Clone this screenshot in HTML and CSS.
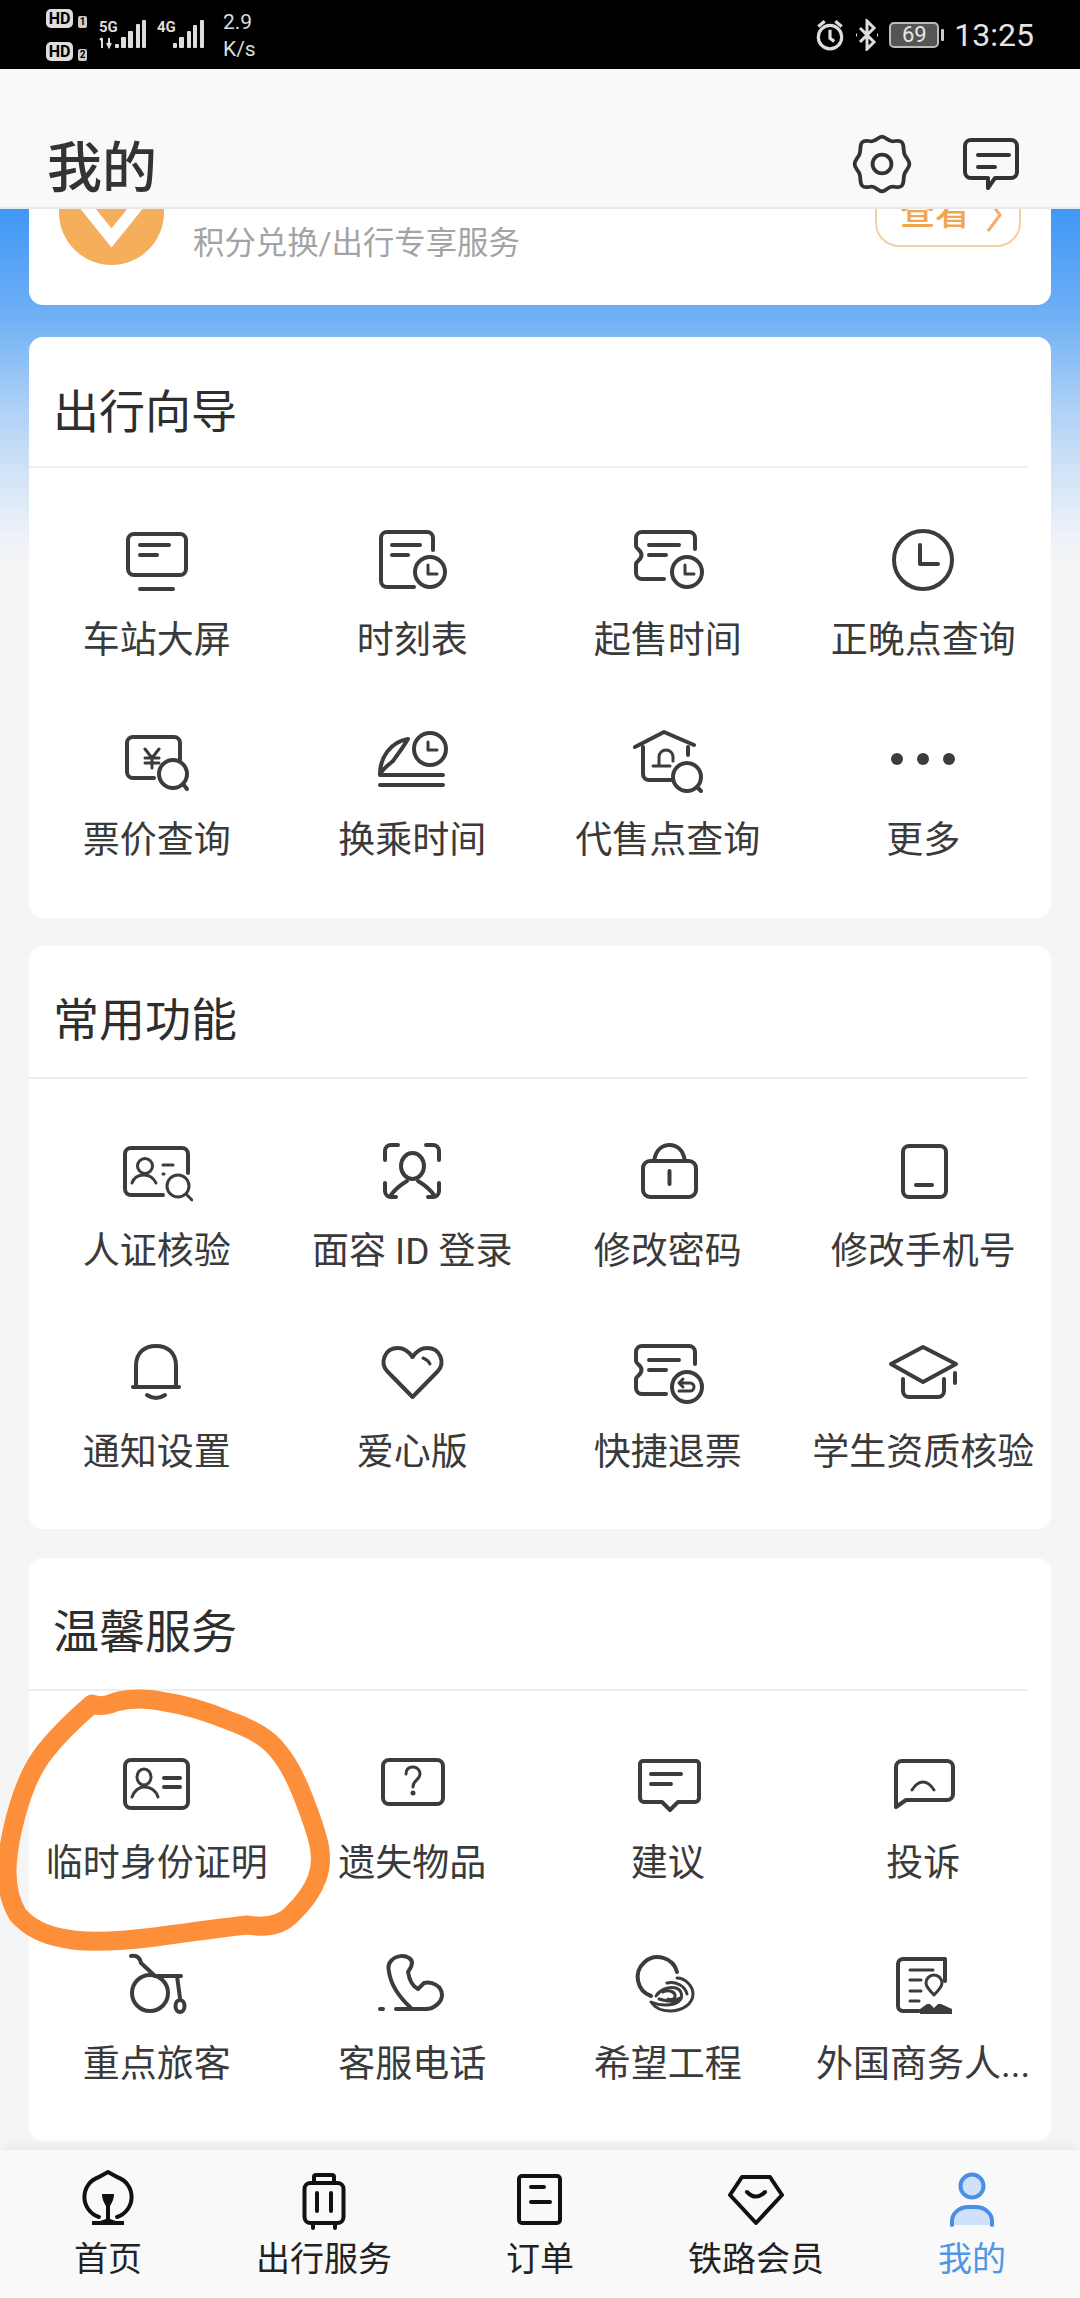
FILE: index.html
```html
<!DOCTYPE html>
<html lang="zh-CN">
<head>
<meta charset="utf-8">
<title>我的</title>
<link rel="stylesheet" href="styles.css">
</head>
<body>
<div class="app">
  <div class="statusbar">
    <div class="status-left">
      <div class="sims">
        <div class="sim"><span class="hd">HD</span><span class="simno">1</span></div>
        <div class="sim"><span class="hd">HD</span><span class="simno">2</span></div>
      </div>
      <svg class="signals" width="106" height="69" viewBox="0 0 106 69">
        <text class="net" x="0" y="32">5G</text>
        <path class="sb-line" d="M3 38v10M1 40l2-2M10 38v9M8 43l2 4 2-4"/>
        <rect class="sb-bar" x="16" y="44" width="4" height="4" rx="1"/>
        <rect class="sb-bar" x="22" y="37" width="5" height="11" rx="1"/>
        <rect class="sb-bar" x="29" y="31" width="5" height="17" rx="1"/>
        <rect class="sb-bar" x="37" y="24" width="4" height="24" rx="1"/>
        <rect class="sb-bar" x="43" y="20" width="4" height="28" rx="1"/>
        <text class="net" x="58" y="32">4G</text>
        <rect class="sb-bar" x="74" y="43" width="4" height="5" rx="1"/>
        <rect class="sb-bar" x="80" y="37" width="5" height="11" rx="1"/>
        <rect class="sb-bar" x="88" y="31" width="4" height="17" rx="1"/>
        <rect class="sb-bar" x="94" y="25" width="4" height="23" rx="1"/>
        <rect class="sb-bar" x="101" y="20" width="4" height="28" rx="1"/>
      </svg>
      <div class="speed"><span>2.9</span><span>K/s</span></div>
    </div>
    <div class="status-right">
      <svg class="sb-ic" width="30" height="34" viewBox="0 0 28 32"><circle cx="14" cy="18" r="11"/><path d="M14 11v8l4 3M3 8l6-5M25 8l-6-5"/></svg>
      <svg class="sb-ic" width="24" height="32" viewBox="0 0 24 32"><path d="M5 9l14 14-7 7V2l7 7L5 23"/><path d="M1 16h1M22 16h1"/></svg>
      <div class="battery"><div class="batt-body"><span class="batt-text">69</span></div><div class="batt-nub"></div></div>
      <span class="clock">13:25</span>
    </div>
  </div>

  <header class="topbar">
    <h1 class="title">我的</h1>
    <div class="top-actions">
      <svg class="top-ic gear" width="68" height="68" viewBox="0 0 72 72"><path d="M36 7C40 7 42 12 47 12C51 12 54 10 57 13C60 16 58 22 60 26C62 30 65 32 65 36C65 40 62 42 60 46C58 50 60 56 57 59C54 62 51 60 47 60C42 60 40 65 36 65C32 65 30 60 25 60C21 60 18 62 15 59C12 56 14 50 12 46C10 42 7 40 7 36C7 32 10 30 12 26C14 22 12 16 15 13C18 10 21 12 25 12C30 12 32 7 36 7Z"/><circle cx="36" cy="36" r="10"/></svg>
      <svg class="top-ic" width="72" height="72" viewBox="0 0 72 72"><path d="M16 12H56a6 6 0 0 1 6 6V44a6 6 0 0 1-6 6H40L33 60V50H16a6 6 0 0 1-6-6V18a6 6 0 0 1 6-6Z"/><path d="M23 27H54M23 39H40"/></svg>
    </div>
  </header>

  <main class="content">
    <section class="card promo">
      <svg class="promo-logo" width="105" height="105" viewBox="0 0 105 105"><circle cx="52.5" cy="52.5" r="52.5" fill="#f5ae5c"/><path d="M14 30L52.5 78L91 30" fill="none" stroke="#fff" stroke-width="12"/></svg>
      <p class="promo-text">积分兑换/出行专享服务</p>
      <div class="promo-btn"><span>查看</span><svg width="16" height="36" viewBox="0 0 16 36"><path d="M2 2L14 18L2 34" fill="none" stroke="#f2ae66" stroke-width="3"/></svg></div>
    </section>

    <section class="card guide">
      <h2 class="card-head">出行向导</h2>
      <div class="grid">
        <div class="item">
          <svg class="ic" viewBox="0 0 72 72"><rect x="7" y="10" width="58" height="41" rx="6"/><path d="M19 21H48M19 31H36M19 65H52"/></svg>
          <span class="label">车站大屏</span>
        </div>
        <div class="item">
          <svg class="ic" viewBox="0 0 72 72"><path d="M57 26V14a6 6 0 0 0-6-6H11a6 6 0 0 0-6 6V57a6 6 0 0 0 6 6H38M16 21H44M16 31H32"/><circle cx="54" cy="48" r="15"/><path class="thin" d="M52 41V50H61"/></svg>
          <span class="label">时刻表</span>
        </div>
        <div class="item">
          <svg class="ic" viewBox="0 0 72 72"><path d="M32 55H10a6 6 0 0 1-6-6V40C4 37 9.5 36 9.5 31C9.5 26 4 25 4 22V14a6 6 0 0 1 6-6H57a6 6 0 0 1 6 6V25M17 21H47M17 31H34"/><circle cx="55" cy="48" r="15"/><path class="thin" d="M53 41V50H62"/></svg>
          <span class="label">起售时间</span>
        </div>
        <div class="item">
          <svg class="ic" viewBox="0 0 72 72"><circle cx="36" cy="36" r="29"/><path d="M33 21V40H51"/></svg>
          <span class="label">正晚点查询</span>
        </div>
        <div class="item">
          <svg class="ic" viewBox="0 0 72 72"><path d="M59 36V19a6 6 0 0 0-6-6H12a6 6 0 0 0-6 6V48a6 6 0 0 0 6 6H33"/><path class="thin" d="M24 25L31 34L38 25M24 34H38M24 39H38M31 34V44"/><circle cx="52" cy="50" r="14"/><path d="M62 60L66 65"/></svg>
          <span class="label">票价查询</span>
        </div>
        <div class="item">
          <svg class="ic" viewBox="0 0 72 72"><circle cx="54" cy="25" r="16"/><path class="thin" d="M52 18V26H61"/><path d="M4 50C4 34 14 18 32 15M17 37C22 30 28 22 32 15M17 37C12 41 7 45 4 50M4 51H67M4 61H67"/></svg>
          <span class="label">换乘时间</span>
        </div>
        <div class="item">
          <svg class="ic" viewBox="0 0 72 72"><path d="M3 23L32 8L62 21M11 23V50a6 6 0 0 0 6 6H39M56 23V31"/><path class="thin" d="M27 41V33a7 7 0 0 1 14 0V37M21 42H38"/><circle cx="55" cy="53" r="14"/><path d="M65 63L69 67"/></svg>
          <span class="label">代售点查询</span>
        </div>
        <div class="item">
          <svg class="ic" viewBox="0 0 72 72"><circle class="dot" cx="10" cy="35" r="6"/><circle class="dot" cx="36" cy="35" r="6"/><circle class="dot" cx="62" cy="35" r="6"/></svg>
          <span class="label">更多</span>
        </div>
      </div>
    </section>

    <section class="card">
      <h2 class="card-head">常用功能</h2>
      <div class="grid">
        <div class="item">
          <svg class="ic" viewBox="0 0 72 72"><path d="M67 38V19a6 6 0 0 0-6-6H10a6 6 0 0 0-6 6V54a6 6 0 0 0 6 6H42"/><circle class="thin" cx="24" cy="31" r="7.5"/><path class="thin" d="M11 48C13 42 18 40 23 40C28 40 32 42 35 48M42 30H52M42 39H43"/><circle class="thin" cx="57" cy="51" r="11"/><path class="thin" d="M65 59L71 65"/></svg>
          <span class="label">人证核验</span>
        </div>
        <div class="item">
          <svg class="ic" viewBox="0 0 72 72"><path d="M22 10H15a6 6 0 0 0-6 6V25M50 10H57a6 6 0 0 1 6 6V25M9 48V56a6 6 0 0 0 6 6H20M63 48V56a6 6 0 0 1-6 6H52"/><ellipse cx="36.500" cy="31" rx="11.500" ry="13"/><path d="M15 60C20 53 26 49 31 46M58 60C53 53 47 49 42 46"/></svg>
          <span class="label">面容 ID 登录</span>
        </div>
        <div class="item">
          <svg class="ic" viewBox="0 0 72 72"><rect x="11" y="26" width="53" height="36" rx="7"/><path d="M22 26C24 14 31 10 37.500 10C44 10 51 14 53 26M37.500 36V49"/></svg>
          <span class="label">修改密码</span>
        </div>
        <div class="item">
          <svg class="ic" viewBox="0 0 72 72"><rect x="16" y="11" width="43" height="51" rx="6"/><path d="M29 50H45"/></svg>
          <span class="label">修改手机号</span>
        </div>
        <div class="item">
          <svg class="ic" viewBox="0 0 72 72"><path d="M15 49V30C15 16 24 10 35 10C46 10 55 16 55 30V49M12 51H58M26 59Q35 65 44 59"/></svg>
          <span class="label">通知设置</span>
        </div>
        <div class="item">
          <svg class="ic" viewBox="0 0 72 72"><path d="M36.500 61L11 35C4 27 8 12 22 12C29 12 33 16 36.500 21C40 16 44 12 51 12C65 12 69 27 62 35Z"/><path class="thin" d="M47 22Q52 24 54 28"/></svg>
          <span class="label">爱心版</span>
        </div>
        <div class="item">
          <svg class="ic" viewBox="0 0 72 72"><path d="M34 58H10a6 6 0 0 1-6-6V43C4 40 9.5 39 9.5 34C9.5 29 4 28 4 25V16a6 6 0 0 1 6-6H57a6 6 0 0 1 6 6V28M17 24H47M17 34H34"/><circle cx="55" cy="51" r="15"/><path class="thin" d="M47 55H58a4 4 0 0 0 0-8H47M51 43L47 47L51 51"/></svg>
          <span class="label">快捷退票</span>
        </div>
        <div class="item">
          <svg class="ic" viewBox="0 0 72 72"><path d="M4 28L36 11L69 28L36 46ZM16 43V55a6 6 0 0 0 6 6H51a6 6 0 0 0 6-6V43M68 37V47"/></svg>
          <span class="label">学生资质核验</span>
        </div>
      </div>
    </section>

    <section class="card last">
      <h2 class="card-head">温馨服务</h2>
      <div class="grid">
        <div class="item">
          <svg class="ic" viewBox="0 0 72 72"><rect x="4" y="13" width="63" height="48" rx="6"/><ellipse class="thin" cx="23" cy="30" rx="7" ry="8"/><path class="thin" d="M11 50C13 44 18 40 23 40C30 40 35 44 37 50"/><path d="M43 31H59M43 40H59"/></svg>
          <span class="label">临时身份证明</span>
        </div>
        <div class="item">
          <svg class="ic" viewBox="0 0 72 72"><rect x="7" y="13" width="60" height="44" rx="6"/><path class="thin" d="M30 27C30 22 33 20 37 20C41 20 44 23 44 27C44 33 37 33 37 40"/><circle class="dot" cx="37" cy="46" r="2.500"/></svg>
          <span class="label">遗失物品</span>
        </div>
        <div class="item">
          <svg class="ic" viewBox="0 0 72 72"><path d="M11 14H64a3 3 0 0 1 3 3V51a4 4 0 0 1-4 4H46L38 63L30 55H12a4 4 0 0 1-4-4V17a3 3 0 0 1 3-3Z"/><path d="M19 27H49M19 37H39"/></svg>
          <span class="label">建议</span>
        </div>
        <div class="item">
          <svg class="ic" viewBox="0 0 72 72"><path d="M9 60V20a6 6 0 0 1 6-6H60a6 6 0 0 1 6 6V47a6 6 0 0 1-6 6H19Z"/><path class="thin" d="M25 43Q30 35 36 35Q42 35 47 43"/></svg>
          <span class="label">投诉</span>
        </div>
        <div class="item">
          <svg class="ic" viewBox="0 0 72 72"><path d="M10 8C16 7 19 10 20 15L34 28M34 28H60M56 28L59 50"/><circle cx="29" cy="45" r="18"/><ellipse cx="59" cy="58" rx="4.500" ry="6"/></svg>
          <span class="label">重点旅客</span>
        </div>
        <div class="item">
          <svg class="ic" viewBox="0 0 72 72"><path d="M20 61H50C58 61 66 54 66 47C66 38 56 33 48 35L42 41C36 38 33 30 32 24C36 18 38 13 33 10C29 7 20 7 15 13C12 16 12 20 13 24C15 37 23 49 35 60"/><path d="M4 61H7"/></svg>
          <span class="label">客服电话</span>
        </div>
        <div class="item">
          <svg class="ic" viewBox="0 0 72 72"><path d="M19 48A20 20 0 1 1 45 24"/><path class="thin" d="M45 30C53 30 61 38 61 46C61 56 50 63 38 63C30 63 23 60 19 54C28 58 40 58 46 54C52 50 50 42 44 40C36 38 28 42 24 48M35 35C44 33 53 38 55 46M31 44C37 41 44 44 43 49C42 52 38 52 36 51M27 51C34 53 42 55 48 50"/></svg>
          <span class="label">希望工程</span>
        </div>
        <div class="item">
          <svg class="ic" viewBox="0 0 72 72"><path d="M58 33V11H16a5 5 0 0 0-5 5V58a5 5 0 0 0 5 5H32"/><path class="thin" d="M23 22H46M23 32H34M23 43H34M23 53H32"/><path class="thin" d="M47 27a8 8 0 0 1 8 8C55 39 51 43 47 47C43 43 39 39 39 35a8 8 0 0 1 8-8Z"/><path class="solid" d="M33 66V61L40 56H43L47 60L51 56H54L65 61V66Z"/></svg>
          <span class="label">外国商务人...</span>
        </div>
      </div>
    </section>
  </main>

  <nav class="tabbar">
    <div class="tab">
      <svg class="tab-ic" viewBox="0 0 72 72"><path d="M27 54A21 21 0 0 1 27 14L36 9L45 14A21 21 0 0 1 45 54"/><path class="tab-fill" d="M30 31H42C42 37 39 41 38 43V56L44 58H52V62H20V58H28L34 56V43C33 41 30 37 30 31Z"/></svg>
      <span class="tab-label">首页</span>
    </div>
    <div class="tab">
      <svg class="tab-ic" viewBox="0 0 72 72"><rect x="16.500" y="20" width="39" height="40" rx="6"/><path d="M26 20V14a2 2 0 0 1 2-2H44a2 2 0 0 1 2 2V20M29 30V48M43 30V48M25 60V65M47 60V65"/></svg>
      <span class="tab-label">出行服务</span>
    </div>
    <div class="tab">
      <svg class="tab-ic" viewBox="0 0 72 72"><rect x="15" y="13" width="41" height="47" rx="3"/><path d="M27 24H40M27 39H46"/></svg>
      <span class="tab-label">订单</span>
    </div>
    <div class="tab">
      <svg class="tab-ic" viewBox="0 0 72 72"><path d="M22 14H50L62 32L36 60L10 32Z"/><path d="M27 29Q36 38 45 29"/></svg>
      <span class="tab-label">铁路会员</span>
    </div>
    <div class="tab active">
      <svg class="tab-ic me" viewBox="0 0 72 72"><circle cx="36" cy="23" r="11.500"/><path d="M16 62V58C16 50 24 44 32 44H40C48 44 56 50 56 58V62"/></svg>
      <span class="tab-label">我的</span>
    </div>
  </nav>

  <svg class="scribble" width="340" height="290" viewBox="0 0 340 290"><path d="M92 24Q101 28 115.500 22Q138 16 165.500 22Q193 26 227.500 40Q262 52 275.500 68Q289 83 299.500 108Q310 133 317 156.500Q324 180 317 198.500Q310 217 292.500 233.500Q278 250 247.500 245Q220 248 155 257Q90 265 62 258Q34 253 18 235Q7 217 7 192Q7 167 17.500 130Q28 93 45 71.500Q62 50 92 24Z"/></svg>
</div>
</body>
</html>
```

FILE: styles.css
```css
* { box-sizing: border-box; }
html, body { margin: 0; padding: 0; }
body { font-family: "Roboto", "Noto Sans CJK SC", sans-serif; background: #f5f5f5; }

.app {
  position: relative;
  width: 1080px;
  height: 2298px;
  display: flex;
  flex-direction: column;
  overflow: hidden;
}

/* status bar */
.statusbar {
  flex: 0 0 69px;
  background: #000;
  color: #ddd;
  display: flex;
  justify-content: space-between;
  align-items: center;
  padding: 0 46px;
}
.status-left { display: flex; align-items: center; }
.sims { display: flex; flex-direction: column; gap: 14px; width: 53px; }
.sim { display: flex; align-items: flex-end; gap: 5px; }
.hd {
  width: 27px;
  height: 19px;
  background: #ddd;
  color: #000;
  border-radius: 5px;
  font-size: 16px;
  font-weight: 700;
  line-height: 19px;
  text-align: center;
}
.simno {
  width: 9px;
  height: 12px;
  background: #ccc;
  color: #000;
  border-radius: 2px;
  font-size: 10px;
  font-weight: 700;
  line-height: 12px;
  text-align: center;
}
.signals { display: block; }
.net { font-size: 15px; font-weight: 700; fill: #ddd; font-family: "Roboto", sans-serif; }
.sb-bar { fill: #ddd; }
.sb-line { fill: none; stroke: #ddd; stroke-width: 2; }
.speed {
  display: flex;
  flex-direction: column;
  margin-left: 18px;
  font-size: 21px;
  line-height: 27px;
  margin-top: 2px;
}
.status-right { display: flex; align-items: center; gap: 10px; }
.sb-ic { fill: none; stroke: #ddd; stroke-width: 3; }
.battery { display: flex; align-items: center; gap: 2px; }
.batt-body {
  width: 50px;
  height: 26px;
  border: 2px solid #bbb;
  border-radius: 5px;
  background: #555;
  display: flex;
  align-items: center;
  justify-content: center;
}
.batt-text { font-size: 22px; line-height: 22px; color: #e6e6e6; }
.batt-nub { width: 3px; height: 12px; background: #ccc; border-radius: 1px; }
.clock { font-size: 32px; line-height: 36px; color: #e4e4e4; }

/* header */
.topbar {
  flex: 0 0 139px;
  background: #f9f9f9;
  border-bottom: 2px solid #e9e9e9;
  display: flex;
  justify-content: space-between;
  align-items: flex-start;
  padding: 59px 53px 0 47px;
  position: relative;
  z-index: 1;
}
.title {
  margin: 0;
  font-size: 55px;
  line-height: 78px;
  margin-top: 1px;
  font-weight: 500;
  color: #333;
}
.top-actions { display: flex; align-items: center; gap: 39px; }
.top-ic { fill: none; stroke: #333; stroke-width: 4; stroke-linecap: round; stroke-linejoin: round; }

/* scrolling content */
.content {
  flex: 1 1 0;
  min-height: 0;
  overflow: hidden;
  padding: 0 29px;
  display: flex;
  flex-direction: column;
  gap: 28px;
  background: linear-gradient(180deg, #3f97f5 0, #71b0f5 109px, #a9cff6 192px, #cfe2f6 259px, #edf1f8 325px, #f5f5f5 359px);
}
.card {
  flex: 0 0 auto;
  background: #fff;
  border-radius: 14px;
}

.promo {
  margin-top: -104px;
  height: 200px;
  padding: 55px 30px 41px;
  display: flex;
  align-items: flex-start;
}
.promo-logo { flex: 0 0 auto; }
.promo-text {
  margin: 64px 0 0 29px;
  font-size: 31.400px;
  line-height: 40px;
  color: #a3a3a3;
}
.promo-btn {
  margin: 27px 0 0 auto;
  width: 146px;
  height: 60px;
  border: 2px solid #f6cfa2;
  border-radius: 24px;
  display: flex;
  align-items: flex-start;
  gap: 16px;
  padding: 0 0 0 23px;
  color: #f0a64f;
  font-size: 35px;
  font-weight: 500;
  line-height: 50px;
}
.promo-btn svg { flex: 0 0 auto; margin-top: 8px; }

.guide { margin-top: 4px; }
.guide .card-head { height: 131px; padding-top: 12px; }
.guide .grid { row-gap: 58px; padding-bottom: 52px; }
.last { margin-top: 1px; }

.card-head {
  margin: 0 23px 0 0;
  height: 133px;
  padding: 8px 0 0 24px;
  display: flex;
  align-items: center;
  font-size: 46px;
  font-weight: 400;
  color: #2e2e2e;
  border-bottom: 2px solid #eeeeee;
}
.grid {
  display: grid;
  grid-template-columns: repeat(4, 1fr);
  row-gap: 59px;
  padding: 56px 0 51px;
}
.item {
  display: flex;
  flex-direction: column;
  align-items: center;
  min-width: 0;
}
.ic {
  width: 72px;
  height: 72px;
  margin-bottom: 20px;
  fill: none;
  stroke: #3c3c3c;
  stroke-width: 4;
  stroke-linecap: round;
  stroke-linejoin: round;
}
.ic .thin { stroke-width: 3; }
.ic .dot { fill: #3c3c3c; stroke: none; }
.ic .solid { fill: #3c3c3c; stroke: none; }
.label {
  font-size: 37px;
  line-height: 50px;
  color: #3a3a3a;
  white-space: nowrap;
}

/* tab bar */
.tabbar {
  flex: 0 0 148px;
  background: #f9f9f9;
  display: flex;
  padding-top: 13px;
  box-shadow: 0 -8px 8px -2px rgba(0, 0, 0, 0.035);
  position: relative;
}
.tab {
  flex: 1 1 0;
  display: flex;
  flex-direction: column;
  align-items: center;
}
.tab-ic {
  width: 72px;
  height: 72px;
  fill: none;
  stroke: #111;
  stroke-width: 4;
  stroke-linecap: round;
  stroke-linejoin: round;
}
.tab-ic .tab-fill { fill: #111; stroke: none; }
.tab-ic.me { stroke: #4a8fe3; fill: #cfe0fb; }
.tab-label {
  font-size: 34px;
  line-height: 48px;
  color: #222;
}
.tab.active .tab-label { color: #4f97e6; }

/* hand-drawn marker over the screenshot */
.scribble {
  position: absolute;
  left: 0;
  top: 1680px;
  fill: none;
  stroke: #fd8f3a;
  stroke-width: 19;
  stroke-linejoin: round;
  z-index: 2;
}
```
